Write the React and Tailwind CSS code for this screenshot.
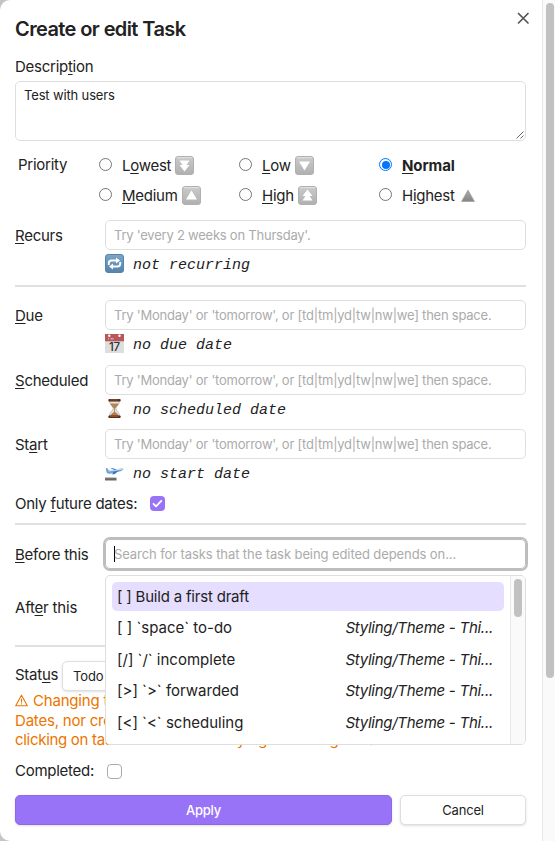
import React from "react";

const U = ({ children }) => (
  <span className="underline decoration-1 underline-offset-2">{children}</span>
);

function Keycap({ kind }) {
  return (
    <svg width="19" height="19" viewBox="0 0 19 19" className="-mt-px shrink-0">
      <defs>
        <linearGradient id="cap" x1="0" y1="0" x2="0" y2="1">
          <stop offset="0" stopColor="#cbcbcb" />
          <stop offset="1" stopColor="#b0b0b0" />
        </linearGradient>
      </defs>
      <rect x="0.5" y="0.5" width="18" height="18" rx="2.5" fill="url(#cap)" stroke="#b0b0b0" />
      <path d="M2 1.7h15" stroke="#e4e4e4" />
      {kind === "down2" && <path d="M4.5 4.500h10L11.500 9h3L9.500 15.500 4.500 9h3z" fill="#fff" />}
      {kind === "down" && <path d="M4 5.500h11L9.500 14.500z" fill="#fff" />}
      {kind === "up" && <path d="M4 13.500h11L9.500 4.500z" fill="#fff" />}
      {kind === "up2" && <path d="M4.500 14.500h10L11.500 10h3L9.500 3.500 4.500 10h3z" fill="#fff" />}
    </svg>
  );
}

function Radio({ checked }) {
  return (
    <span
      className={
        checked
          ? "flex size-[13px] items-center justify-center rounded-full border border-[#0075ff] bg-white"
          : "block size-[13px] rounded-full border border-[#767676] bg-white"
      }
    >
      {checked && <span className="size-[8px] rounded-full bg-[#0075ff]" />}
    </span>
  );
}

function Choice({ children, icon, checked }) {
  return (
    <div className="flex h-[30px] w-[140px] items-center">
      <div className="-mt-[3px]">
        <Radio checked={checked} />
      </div>
      <span className="ml-[10px] mr-[4px]">{children}</span>
      {icon}
    </div>
  );
}

const RecurIcon = () => (
  <svg width="19" height="19" viewBox="0 0 19 19">
    <defs>
      <linearGradient id="rec" x1="0" y1="0" x2="0" y2="1">
        <stop offset="0" stopColor="#7ba6c8" />
        <stop offset="1" stopColor="#5583a9" />
      </linearGradient>
    </defs>
    <rect x="0.5" y="0.5" width="18" height="18" rx="2.5" fill="url(#rec)" stroke="#5684aa" />
    <path d="M3.800 11V9.200q0-2.700 2.700-2.700h5.200M15.200 8V9.800q0 2.700-2.700 2.700H7.300" fill="none" stroke="#fff" strokeWidth="1.900" />
    <path d="M11 3.500l4 3-4 3zM8 9.500l-4 3 4 3z" fill="#fff" />
  </svg>
);

const CalendarIcon = () => (
  <svg width="19" height="19" viewBox="0 0 19 19">
    <rect width="19" height="19" fill="#dedede" />
    <rect width="19" height="7.3" fill="#b9565c" />
    <path d="M3 4.700h1M5.500 4.700h3" stroke="#dea3a5" strokeWidth="1.400" />
    <circle cx="4.300" cy="1.700" r="1.200" fill="#fff" />
    <circle cx="14.500" cy="1.700" r="1.200" fill="#fff" />
    <text x="9.400" y="17" textAnchor="middle" fontSize="11.500" fill="#333" className="font-['Inter',sans-serif] font-medium">17</text>
  </svg>
);

const HourglassIcon = () => (
  <svg width="19" height="19" viewBox="0 0 19 19">
    <path d="M4.500 2c0 4 3.700 5.200 3.700 7.500S4.500 13 4.500 17h10c0-4-3.700-5.200-3.700-7.500S14.500 6 14.500 2z" fill="#dfe5e8" stroke="#a8adaf" strokeWidth=".7" />
    <path d="M5.300 4.500h8.400c-.7 2.300-2.500 3.300-3.400 4.800H8.700C7.800 7.800 6 6.800 5.300 4.500z" fill="#b9834f" />
    <path d="M9.500 9v4.500" stroke="#a87647" strokeWidth=".8" />
    <path d="M5.500 17c.6-2.500 2.500-3 4-4.200 1.500 1.200 3.400 1.700 4 4.200z" fill="#bd7b48" />
    <rect x="3.300" y="0" width="12.400" height="2.500" rx="1" fill="#5d2c17" />
    <rect x="3.300" y="16.500" width="12.400" height="2.500" rx="1" fill="#5d2c17" />
    <path d="M5 .9h8M5 17.500h8" stroke="#a25b34" strokeWidth=".7" />
  </svg>
);

const PlaneIcon = () => (
  <svg width="19" height="19" viewBox="0 0 19 19">
    <path d="M0 14.700h11.500v2.800H0z" fill="#686868" />
    <path d="M0 15h9" stroke="#9b9b9b" strokeWidth=".6" />
    <path d="M.8 5.300l1.200-.2 2 2.300 12-1.900c1.600-.2 2.600.3 2.300 1-.3.800-2 1.500-4 2.100L5 10.700c-2 .3-3.500-.4-3.600-1.900z" fill="#6da2db" />
    <path d="M3.600 8l12-1.900c1-.1 1.800 0 2 .3" fill="none" stroke="#d5e6f5" strokeWidth="1.100" />
    <path d="M8.500 8.800l5-1-3.600 3.200-2.800.5z" fill="#3577ba" />
    <path d="M5.500 5.200l1.500-.3 4.500 1.700-2 .5z" fill="#3a79bd" />
  </svg>
);

function Field({ label, placeholder, icon, status }) {
  return (
    <div className="flex shrink-0">
      <div className="flex h-[30px] w-[90px] shrink-0 items-center pt-px">{label}</div>
      <div className="min-w-0 flex-1">
        <div className="flex h-[30px] items-center rounded-[5px] border border-[#dedede] px-2 text-[13px] text-[#ababab]">
          <span className="whitespace-nowrap tracking-[-0.23px]">{placeholder}</span>
        </div>
        <div className="mt-[4px] flex h-[19px] items-center gap-[9px]">
          {icon}
          <i className="whitespace-pre pt-[5px] font-['Liberation_Mono',monospace] text-[15px] tracking-[0px]">{status}</i>
        </div>
      </div>
    </div>
  );
}

const Rule = () => <div className="h-[2px] shrink-0 bg-[#e0e0e0]" />;

const suggestions = [
  ["[ ] Build a first draft", ""],
  ["[ ] `space` to-do", "Styling/Theme - Thi..."],
  ["[/] `/` incomplete", "Styling/Theme - Thi..."],
  ["[>] `>` forwarded", "Styling/Theme - Thi..."],
  ["[<] `<` scheduling", "Styling/Theme - Thi..."],
];

function Suggestions() {
  return (
    <div className="absolute left-[90px] top-[50px] z-10 flex h-[170px] w-[421px] overflow-hidden rounded-[5px] border border-[#dedede] bg-white">
      <div className="flex flex-1 flex-col gap-[2.500px] p-[6px]">
        {suggestions.map(([name, file], i) => (
          <div
            key={name}
            className={
              i === 0
                ? "flex h-[29px] shrink-0 items-center justify-between rounded-[5px] bg-[#e6deff] pl-[5px] pr-[11px] tracking-[-0.2px]"
                : "flex h-[29px] shrink-0 items-center justify-between pl-[5px] pr-[11px] tracking-[0px]"
            }
          >
            <span className="whitespace-nowrap">{name}</span>
            <i className="whitespace-nowrap tracking-[-0.27px]">{file}</i>
          </div>
        ))}
      </div>
      <div className="flex w-[15px] justify-center border-l border-[#e8e8e8] bg-[#fafafa] pt-[3px]">
        <div className="h-[38px] w-[8px] rounded-full bg-[#c1c1c1]" />
      </div>
    </div>
  );
}

export default function App() {
  const datePh = "Try 'Monday' or 'tomorrow', or [td|tm|yd|tw|nw|we] then space.";
  return (
    <div className="h-[841px] w-[555px] overflow-hidden bg-[#c4c4c4] font-['Inter',sans-serif] text-[15px] leading-[20px] tracking-[-0.26px] text-[#222]">
      <div className="flex h-full overflow-hidden rounded-l-[10px] bg-white">
        <main className="flex w-[542px] shrink-0 flex-col pl-[15px] pr-[16px]">
          <header className="flex h-[57px] shrink-0 justify-between">
            <h1 className="mt-[16px] text-[20px] font-semibold leading-[26px] tracking-[-0.6px]">Create or edit Task</h1>
            <svg width="13" height="13" viewBox="0 0 13 13" className="-mr-[4px] mt-[12px]" fill="none" stroke="#555" strokeWidth="1.700" strokeLinecap="round">
              <path d="M1.500 1.500l9.500 9.500M11 1.500l-9.500 9.500" />
            </svg>
          </header>
          <div className="h-[24px] shrink-0">Descrip<U>t</U>ion</div>
          <div className="flex h-[60px] shrink-0 justify-between rounded-[5px] border border-[#dedede] pl-2 text-[13px] leading-[18px] tracking-[-0.15px]">
            <span className="mt-[4px]">Test with users</span>
            <svg width="8" height="8" viewBox="0 0 8 8" className="mb-[1px] mr-[1px] self-end" stroke="#555" strokeWidth=".9">
              <path d="M.5 7.500l7-7M4.500 7.500l3-3" />
            </svg>
          </div>
          <div className="flex h-[79px] shrink-0 pt-[10px]">
            <div className="flex h-[30px] w-[84px] items-center pb-[2px] pl-[3px]">Priority</div>
            <div className="flex w-[425px] shrink-0 flex-wrap content-start">
              <Choice icon={<Keycap kind="down2" />}>L<U>o</U>west</Choice>
              <Choice icon={<Keycap kind="down" />}><U>L</U>ow</Choice>
              <Choice checked><b className="font-bold tracking-[-0.1px]"><U>N</U>ormal</b></Choice>
              <Choice icon={<Keycap kind="up" />}><U>M</U>edium</Choice>
              <Choice icon={<Keycap kind="up2" />}><U>H</U>igh</Choice>
              <Choice
                icon={
                  <svg width="16" height="14" viewBox="0 0 16 14" className="-mt-px ml-[1px]">
                    <defs>
                      <linearGradient id="peak" x1="0" y1="0" x2="0" y2="1">
                        <stop offset="0" stopColor="#aaa" />
                        <stop offset="1" stopColor="#858585" />
                      </linearGradient>
                    </defs>
                    <path d="M8 1l6.500 11.500h-13z" fill="url(#peak)" stroke="#999" strokeWidth=".6" />
                  </svg>
                }
              >
                H<U>i</U>ghest
              </Choice>
            </div>
          </div>
          <div className="h-[65px] shrink-0">
            <Field label={<span><U>R</U>ecurs</span>} placeholder="Try 'every 2 weeks on Thursday'." icon={<RecurIcon />} status="not recurring" />
          </div>
          <Rule />
          <div className="flex h-[194px] shrink-0 flex-col pt-[13px]">
            <div className="h-[65px] shrink-0">
              <Field label={<span><U>D</U>ue</span>} placeholder={datePh} icon={<CalendarIcon />} status="no due date" />
            </div>
            <div className="h-[64px] shrink-0">
              <Field label={<span><U>S</U>cheduled</span>} placeholder={datePh} icon={<HourglassIcon />} status="no scheduled date" />
            </div>
            <Field label={<span>St<U>a</U>rt</span>} placeholder={datePh} icon={<PlaneIcon />} status="no start date" />
          </div>
          <div className="flex h-[42px] shrink-0 items-center pt-[3px]">
            <span className="w-[135px] tracking-[-0.24px]">Only <U>f</U>uture dates:</span>
            <span className="flex size-[15px] items-center justify-center rounded-[4px] bg-[#9873f7]">
              <svg width="11" height="11" viewBox="0 0 11 11" fill="none" stroke="#fff" strokeWidth="1.800" strokeLinecap="round" strokeLinejoin="round">
                <path d="M1.500 5.800l2.500 2.500 5.300-5.500" />
              </svg>
            </span>
          </div>
          <Rule />
          <section className="relative flex h-[120px] shrink-0 flex-col pt-[14px]">
            <div className="flex h-[30px]">
              <div className="flex w-[90px] shrink-0 items-center pt-px"><span><U>B</U>efore this</span></div>
              <div className="flex flex-1 items-center rounded-[5px] border border-[#bdbdbd] pl-2 text-[13px] text-[#ababab] ring-2 ring-[#bdbdbd]">
                <span className="-mr-px h-[16px] w-px bg-black" />
                <span className="whitespace-nowrap tracking-[-0.09px]">Search for tasks that the task being edited depends on...</span>
              </div>
            </div>
            <div className="mt-[29px] tracking-[-0.2px]">Aft<U>e</U>r this</div>
            <Suggestions />
          </section>
          <Rule />
          <div className="flex h-[44px] shrink-0 items-end">
            <span className="mb-[6px] w-[47px]">Stat<U>u</U>s</span>
            <div className="flex h-[30px] w-[80px] items-center rounded-[5px] border border-[#dedede] px-[10px] text-[13px] tracking-[-0.1px] shadow-sm">Todo</div>
          </div>
          <div className="h-[59px] shrink-0 whitespace-nowrap leading-[19.500px] text-[#ec7500]">
            <div className="flex items-center gap-[5px] tracking-[-0.2px]">
              <svg width="13" height="13" viewBox="0 0 13 13" fill="none" stroke="#ec7500" strokeWidth="1.100" strokeLinejoin="round" strokeLinecap="round">
                <path d="M6.500 1.200L12.300 11.800H.7zM6.500 5v3.200M6.500 9.900v.1" />
              </svg>
              Changing the status does not yet auto-update Done or Cancelled
            </div>
            <div className="tracking-[-0.2px]">Dates, nor create a new recurrence. Complete tasks via command, by</div>
            <div className="tracking-[-0.3px]">clicking on task checkboxes or by right-clicking on task checkboxes.</div>
          </div>
          <div className="flex h-[45px] shrink-0 items-center pb-[3px]">
            <span className="w-[92px]">Completed:</span>
            <span className="size-[15px] rounded-[4px] border border-[#ababab]" />
          </div>
          <footer className="flex h-[30px] shrink-0 gap-2 text-[13px] tracking-[-0.2px]">
            <button className="w-[377px] rounded-[5px] border border-[#8c69e6] bg-[#9873f7] font-medium text-white shadow-sm">Apply</button>
            <button className="flex-1 rounded-[5px] border border-[#dedede] bg-white shadow-sm">Cancel</button>
          </footer>
        </main>
        <aside className="w-[13px] shrink-0 border-l border-[#e8e8e8] bg-[#fafafa] pl-[3px] pt-[3px]">
          <div className="h-[675px] w-[8px] rounded-full bg-[#c1c1c1]" />
        </aside>
      </div>
    </div>
  );
}
